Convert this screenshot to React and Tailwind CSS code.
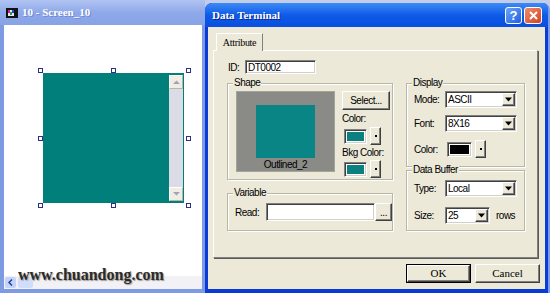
import React from "react";

const SANS = "font-['Liberation_Sans',Arial,sans-serif]";
const SERIF = "font-['Liberation_Serif','Times_New_Roman',serif]";

const sunken =
  "bg-white border border-t-[#808080] border-l-[#808080] border-b-white border-r-white shadow-[inset_1px_1px_0_#404040,inset_-1px_-1px_0_#d4d0c8]";
const raised =
  "bg-[#ece9d8] border border-t-white border-l-white border-b-[#404040] border-r-[#404040] shadow-[inset_-1px_-1px_0_#808080]";
const label = "text-[10px] leading-[13px] tracking-[-0.5px] text-black";

function Handle({ cls }) {
  return <div className={`absolute w-[5px] h-[5px] border border-[#2e2e88] bg-white ${cls}`} />;
}

function Group({ title, className, children }) {
  return (
    <div
      className={`relative border border-[#b9b6a6] shadow-[inset_1px_1px_0_#ffffff,1px_1px_0_#ffffff] ${className}`}
    >
      <span className={`absolute left-[5px] top-[-8px] bg-[#ece9d8] px-[1px] ${label}`}>{title}</span>
      {children}
    </div>
  );
}

function DownTri() {
  return (
    <svg width="7" height="5" viewBox="0 0 7 5">
      <path d="M0 0.5h7L3.5 4.5z" fill="#000" />
    </svg>
  );
}

function Combo({ value, w }) {
  return (
    <div className={`${sunken} ${w} h-[17px] flex items-center`}>
      <span className={`flex-1 pl-[2px] ${label} tracking-[-0.3px]`}>{value}</span>
      <div className={`${raised} w-[13px] h-[13px] mr-[1px] flex items-center justify-center`}>
        <DownTri />
      </div>
    </div>
  );
}

function Swatch({ color, w }) {
  return (
    <div className="flex items-center gap-[3px]">
      <div className={`${sunken} ${w} h-[15px] p-[2px]`}>
        <div className="w-full h-full" style={{ background: color }} />
      </div>
      <div className={`${raised} w-[11px] h-[18px] flex items-center justify-center`}>
        <div className="w-[2px] h-[2px] bg-black" />
      </div>
    </div>
  );
}

function ScrollBtn({ up }) {
  return (
    <div className="w-[14px] h-[14px] bg-[#efede4] border border-t-white border-l-white border-b-[#b8b5a6] border-r-[#b8b5a6] flex items-center justify-center">
      <svg width="7" height="4" viewBox="0 0 7 4">
        {up ? <path d="M0 4L3.5 0.5L7 4z" fill="#a3a3b8" /> : <path d="M0 0L3.5 3.5L7 0z" fill="#a3a3b8" />}
      </svg>
    </div>
  );
}

export default function App() {
  return (
    <div className={`w-[550px] h-[293px] flex bg-[#c3cdea] overflow-hidden ${SANS}`}>
      {/* Left window */}
      <div className="relative w-[205px] h-[293px] shrink-0 flex flex-col bg-[#7d9ae3] pl-[4px] pr-[3px] pb-[4px]">
        <div className="h-[25px] -ml-[4px] -mr-[3px] flex items-center pl-[6px] bg-linear-to-b from-[#b0c3f2] via-[#8fa9e9] to-[#87a2e6]">
          <svg width="12" height="10" viewBox="0 0 12 10">
            <rect x="0" y="0" width="12" height="10" fill="#111" />
            <rect x="2" y="2" width="6" height="6" fill="#e8e8f0" />
            <rect x="2" y="2" width="2" height="3" fill="#d02090" />
            <rect x="4" y="4" width="2" height="3" fill="#20a040" />
            <rect x="6" y="2" width="2" height="3" fill="#2040d0" />
          </svg>
          <span className={`ml-[4px] text-white text-[11px] font-bold ${SERIF} [text-shadow:1px_1px_0_#6f88cf]`}>
            10 - Screen_10
          </span>
        </div>
        <div className="flex-1 bg-white pl-[39px] pt-[48px]">
          <div className="relative w-[141px] h-[130px] bg-[#007f7b] flex justify-end py-[2px] pr-[1px]">
            <div className="w-[14px] flex flex-col bg-[#dcdce6]">
              <ScrollBtn up />
              <div className="flex-1" />
              <ScrollBtn />
            </div>
            <Handle cls="left-[-5px] top-[-5px]" />
            <Handle cls="left-[68px] top-[-5px]" />
            <Handle cls="left-[143px] top-[-5px]" />
            <Handle cls="left-[-5px] top-[63px]" />
            <Handle cls="left-[143px] top-[63px]" />
            <Handle cls="left-[-5px] top-[130px]" />
            <Handle cls="left-[68px] top-[130px]" />
            <Handle cls="left-[143px] top-[130px]" />
          </div>
        </div>
        <div className="h-[13px] bg-[#f1f1f6] flex items-center pl-[1px] gap-[2px]">
          <div className="w-[11px] h-[11px] bg-[#c4d3f6] rounded-[2px] flex items-center justify-center">
            <svg width="5" height="7" viewBox="0 0 5 7">
              <path d="M4 0.5L1 3.5L4 6.5" stroke="#1f3f9f" strokeWidth="1.5" fill="none" />
            </svg>
          </div>
          <div className="w-[15px] h-[11px] bg-[#d2def9] rounded-[2px]" />
        </div>
        <div
          className={`absolute left-[18px] top-[265px] ${SERIF} font-bold text-[16px] leading-[20px] text-[#2b2b2b] [text-shadow:1px_1px_1px_#9a9a9a]`}
        >
          www.chuandong.com
        </div>
      </div>

      {/* Dialog */}
      <div className="w-[345px] h-[290px] mt-[3px] shrink-0 flex flex-col rounded-t-[7px] overflow-hidden bg-[#0a3bd6] border-r-2 border-r-[#7d9bea]">
        <div className="h-[24px] flex items-center pl-[7px] pr-[6px] bg-linear-to-b from-[#3d8af5] via-[#0f5ae8] to-[#0a4fde]">
          <span className={`${SERIF} flex-1 text-[11px] font-bold text-white [text-shadow:1px_1px_0_#0a2a8a]`}>
            Data Terminal
          </span>
          <div className="w-[17px] h-[17px] rounded-[3px] border border-white bg-linear-to-br from-[#6aa4f8] to-[#1f5ee3] flex items-center justify-center text-white text-[13px] font-bold leading-none">
            ?
          </div>
          <div className="ml-[2px] w-[18px] h-[17px] rounded-[3px] border border-white bg-linear-to-br from-[#f08a68] to-[#d4401e] flex items-center justify-center">
            <svg width="9" height="9" viewBox="0 0 9 9">
              <path d="M1 1L8 8M8 1L1 8" stroke="#fff" strokeWidth="2" />
            </svg>
          </div>
        </div>

        <div className="flex-1 mx-[3px] mb-[4px] bg-[#ece9d8] flex flex-col pt-[6px] pl-[5px]">
          <div className="flex pl-[3px]">
            <div
              className={`relative z-10 -mb-px w-[47px] h-[18px] bg-[#ece9d8] border-t border-l border-r border-t-white border-l-white border-r-[#808080] flex items-center justify-center text-[10px] tracking-[-0.3px] ${SERIF}`}
            >
              Attribute
            </div>
          </div>

          <div className="w-[325px] h-[208px] border border-t-white border-l-white border-r-[#808080] border-b-[#808080] shadow-[1px_1px_0_#5a5a5a] pt-[9px] pl-[13px]">
            <div className="flex items-center h-[14px]">
              <span className={`ml-[1px] w-[17px] ${label}`}>ID:</span>
              <div className={`${sunken} w-[71px] h-[14px] flex items-center`}>
                <span className={`pl-[2px] ${label} tracking-[-0.2px]`}>DT0002</span>
              </div>
            </div>

            <div className="flex mt-[9px] gap-[13px]">
              <div className="flex flex-col w-[166px]">
                <Group title="Shape" className="h-[97px] flex pl-[8px] pt-[7px]">
                  <div className="w-[99px] h-[81px] bg-[#8a8a86] border border-[#a5a49c] flex flex-col items-center pt-[13px]">
                    <div className="w-[59px] h-[53px] bg-[#0a8585]" />
                    <span className={label}>Outlined_2</span>
                  </div>
                  <div className="ml-[7px] flex flex-col">
                    <div className={`${raised} w-[48px] h-[19px] flex items-center justify-center ${label}`}>Select...</div>
                    <span className={`mt-[2px] ${label}`}>Color:</span>
                    <div className="mt-[2px] h-[18px] flex items-center pl-[2px]">
                      <Swatch color="#0a8080" w="w-[23px]" />
                    </div>
                    <span className={`mt-[1px] ${label}`}>Bkg Color:</span>
                    <div className="mt-[1px] h-[18px] flex items-center pl-[2px]">
                      <Swatch color="#0a8080" w="w-[23px]" />
                    </div>
                  </div>
                </Group>
                <Group title="Variable" className="mt-[13px] h-[38px] flex pl-[7px] pt-[9px]">
                  <div className="flex items-center h-[18px]">
                    <span className={`w-[31px] ${label}`}>Read:</span>
                    <div className={`${sunken} w-[109px] h-[18px]`} />
                    <div className={`${raised} w-[17px] h-[18px] flex items-center justify-center ${label}`}>...</div>
                  </div>
                </Group>
              </div>

              <div className="flex flex-col w-[119px]">
                <Group title="Display" className="h-[84px] flex flex-col pl-[7px] pt-[7px]">
                  <div className="flex items-center h-[17px]">
                    <span className={`w-[31px] ${label}`}>Mode:</span>
                    <Combo value="ASCII" w="w-[72px]" />
                  </div>
                  <div className="flex items-center h-[17px] mt-[7px]">
                    <span className={`w-[31px] ${label}`}>Font:</span>
                    <Combo value="8X16" w="w-[72px]" />
                  </div>
                  <div className="flex items-center h-[18px] mt-[8px]">
                    <span className={`w-[33px] ${label}`}>Color:</span>
                    <Swatch color="#000000" w="w-[25px]" />
                  </div>
                </Group>
                <Group title="Data Buffer" className="mt-[3px] h-[61px] flex flex-col pl-[7px] pt-[9px]">
                  <div className="flex items-center h-[17px]">
                    <span className={`w-[31px] ${label}`}>Type:</span>
                    <Combo value="Local" w="w-[72px]" />
                  </div>
                  <div className="flex items-center h-[17px] mt-[10px]">
                    <span className={`w-[31px] ${label}`}>Size:</span>
                    <Combo value="25" w="w-[45px]" />
                    <span className={`ml-[6px] ${label}`}>rows</span>
                  </div>
                </Group>
              </div>
            </div>
          </div>

          <div className="flex justify-end pr-[5px] mt-[6px] gap-[4px]">
            <div className="w-[65px] h-[19px] border border-black">
              <div className={`${raised} w-full h-full flex items-center justify-center text-[11px] ${SERIF}`}>OK</div>
            </div>
            <div className={`${raised} w-[65px] h-[19px] flex items-center justify-center text-[11px] ${SERIF}`}>
              Cancel
            </div>
          </div>
        </div>
      </div>
    </div>
  );
}
